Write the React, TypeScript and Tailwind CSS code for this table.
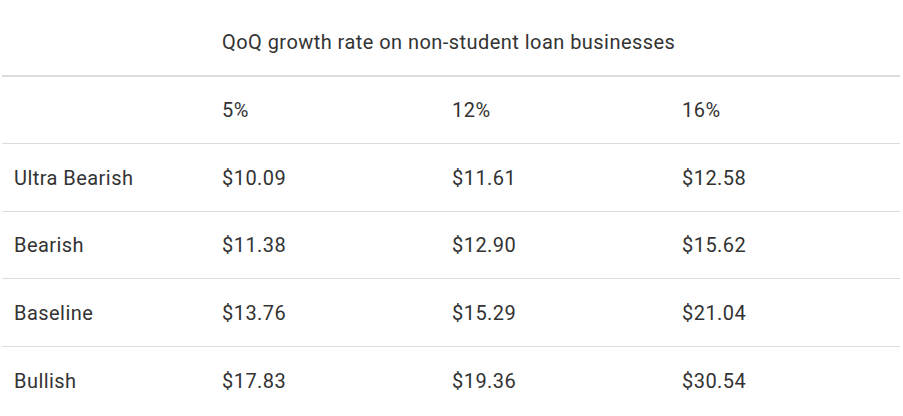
import React from "react";

const rows = [
  { label: "Ultra Bearish", values: ["$10.09", "$11.61", "$12.58"], h: "h-[68px]" },
  { label: "Bearish", values: ["$11.38", "$12.90", "$15.62"], h: "h-[67px]" },
  { label: "Baseline", values: ["$13.76", "$15.29", "$21.04"], h: "h-[68px]" },
  { label: "Bullish", values: ["$17.83", "$19.36", "$30.54"], h: "h-[67px]", last: true },
];

const grid = "grid grid-cols-[208px_230px_230px_230px] items-center";

export default function App() {
  return (
    <div
      className="w-[903px] h-[416px] overflow-hidden bg-white pl-[2px] text-[20px] tracking-[0.45px] text-[#333333]"
      style={{ fontFamily: "Roboto, 'Liberation Sans', sans-serif" }}
    >
      <div className="w-[898px]">
        <div className={`${grid} h-[77px] border-b-2 border-[#dcdcdc] pt-[8px]`}>
          <div />
          <div className="col-span-3 pl-[12px]">
            QoQ growth rate on non-student loan businesses
          </div>
        </div>
        <div className={`${grid} h-[67px] border-b border-[#dcdcdc]`}>
          <div />
          <div className="pl-[12px]">5%</div>
          <div className="pl-[12px]">12%</div>
          <div className="pl-[12px]">16%</div>
        </div>
        {rows.map((r) => (
          <div
            key={r.label}
            className={`${grid} ${r.h} ${r.last ? "" : "border-b border-[#dcdcdc]"}`}
          >
            <div className="pl-[12px]">{r.label}</div>
            {r.values.map((v) => (
              <div key={v} className="pl-[12px]">
                {v}
              </div>
            ))}
          </div>
        ))}
      </div>
    </div>
  );
}
